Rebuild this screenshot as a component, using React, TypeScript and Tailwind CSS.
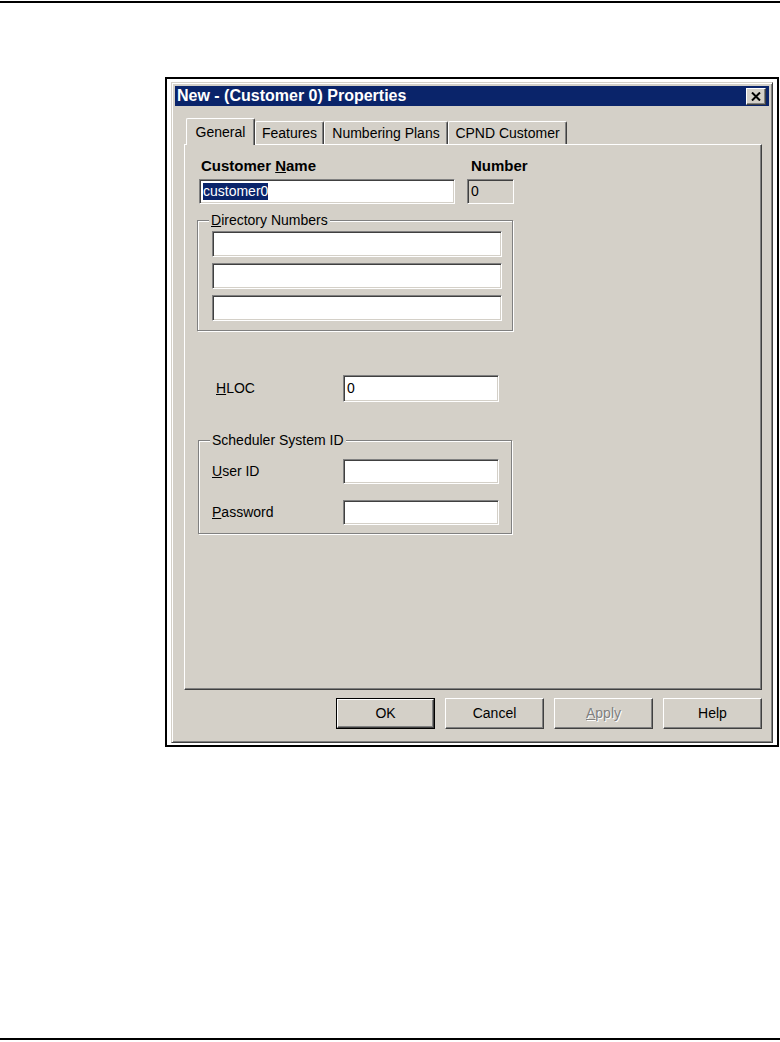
import React from 'react';

const raised = 'border border-t-white border-l-white border-r-[#404040] border-b-[#404040] shadow-[inset_-1px_-1px_0_#808080] bg-[#d4d0c8]';
const sunken = 'border border-t-[#808080] border-l-[#808080] border-r-white border-b-white shadow-[inset_1px_1px_0_#404040,inset_-1px_-1px_0_#d4d0c8]';

const Field: React.FC<{ w: string; h?: string; disabled?: boolean; children?: React.ReactNode }> = ({ w, h = 'h-[26px]', disabled, children }) => (
  <div className={`${w} ${h} ${sunken} ${disabled ? 'bg-[#d4d0c8]' : 'bg-white'} flex items-center pl-[3px] text-[14px] text-black`}>
    {children}
  </div>
);

const GroupBox: React.FC<{ label: React.ReactNode; className: string; children: React.ReactNode }> = ({ label, className, children }) => (
  <div className={`relative border border-[#808080] shadow-[inset_1px_1px_0_#fff,1px_1px_0_#fff] ${className}`}>
    <span className="absolute -top-[10px] left-[11px] px-[2px] bg-[#d4d0c8] text-[14px] leading-[18px] text-black">{label}</span>
    {children}
  </div>
);

const tabs = [
  { name: 'General', w: 'w-[69px]', active: true },
  { name: 'Features', w: 'w-[69px]' },
  { name: 'Numbering Plans', w: 'w-[124px]' },
  { name: 'CPND Customer', w: 'w-[119px]' },
];

const buttons = ['OK', 'Cancel', 'Apply', 'Help'];

export default function App() {
  return (
    <div className="w-[780px] h-[1042px] bg-white flex flex-col font-['Liberation_Sans',Arial,sans-serif] text-black">
      <div className="mt-[1px] h-[2px] bg-black" />

      {/* framed screenshot */}
      <div className="ml-[165px] mt-[74px] w-[614px] h-[670px] border-2 border-black bg-white pt-[3px] pl-[4px]">
        <div className="w-[602px] h-[661px] bg-[#d4d0c8] border border-t-[#d4d0c8] border-l-[#d4d0c8] border-r-[#404040] border-b-[#404040] shadow-[inset_1px_1px_0_#fff,inset_-1px_-1px_0_#808080] p-[3px]">
          {/* title bar */}
          <div className="h-[20px] bg-[#0a246a] flex items-center justify-between pl-[2px]">
            <span className="text-white font-bold text-[16px] leading-[20px]">New - (Customer 0) Properties</span>
            <div className={`w-[20px] h-[17px] mr-[3px] flex items-center justify-center ${raised}`}>
              <svg width="10" height="9" viewBox="0 0 10 9">
                <path d="M1 0.5 L9 8.5 M9 0.5 L1 8.5" stroke="#000" strokeWidth="2" />
              </svg>
            </div>
          </div>

          <div className="ml-[9px] w-[578px]">
            {/* tabs */}
            <div className="mt-[12px] h-[26px] flex items-end pl-[2px]">
              {tabs.map((t) => (
                <div
                  key={t.name}
                  className={`${t.w} ${t.active ? 'h-[27px] -mb-[1px] relative z-10' : 'h-[23px]'} bg-[#d4d0c8] border-l border-t border-r border-l-white border-t-white border-r-[#404040] rounded-tl-[2px] rounded-tr-[2px] shadow-[inset_-1px_0_0_#808080] flex items-center justify-center text-[14px]`}
                >
                  {t.name}
                </div>
              ))}
            </div>

            {/* tab panel */}
            <div className="h-[546px] border-l border-t border-r border-b border-l-white border-t-white border-r-[#404040] border-b-[#404040] shadow-[inset_-1px_-1px_0_#808080]">
              <div className="pl-[14px] pt-[12px]">
                <div className="flex">
                  <div className="w-[256px]">
                    <div className="pl-[2px] h-[18px] leading-[18px] text-[15px] font-bold">
                      Customer <span className="underline">N</span>ame
                    </div>
                    <div className="mt-[4px]">
                      <Field w="w-[256px]" h="h-[25px]">
                        <span className="bg-[#0a246a] text-white leading-[17px]">customer0</span>
                      </Field>
                    </div>
                  </div>
                  <div className="ml-[12px]">
                    <div className="pl-[4px] h-[18px] leading-[18px] text-[15px] font-bold">Number</div>
                    <div className="mt-[4px]">
                      <Field w="w-[47px]" h="h-[25px]" disabled>0</Field>
                    </div>
                  </div>
                </div>

                <GroupBox
                  label={<><span className="underline">D</span>irectory Numbers</>}
                  className="-ml-[2px] mt-[16px] w-[316px] h-[111px] pt-[10px] pl-[14px]"
                >
                  <div className="flex flex-col gap-[6px]">
                    <Field w="w-[290px]" />
                    <Field w="w-[290px]" />
                    <Field w="w-[290px]" />
                  </div>
                </GroupBox>

                <div className="mt-[44px] flex items-center">
                  <span className="w-[144px] pl-[17px] text-[14px]">
                    <span className="underline">H</span>LOC
                  </span>
                  <Field w="w-[156px]" h="h-[27px]">0</Field>
                </div>

                <GroupBox label="Scheduler System ID" className="-ml-[1px] mt-[38px] w-[314px] h-[94px] pt-[18px]">
                  <div className="flex items-center">
                    <span className="w-[144px] pl-[13px] text-[14px]">
                      <span className="underline">U</span>ser ID
                    </span>
                    <Field w="w-[156px]" h="h-[25px]" />
                  </div>
                  <div className="mt-[16px] flex items-center">
                    <span className="w-[144px] pl-[13px] text-[14px]">
                      <span className="underline">P</span>assword
                    </span>
                    <Field w="w-[156px]" h="h-[25px]" />
                  </div>
                </GroupBox>
              </div>
            </div>

            {/* buttons */}
            <div className="mt-[8px] flex justify-end gap-[10px]">
              {buttons.map((b) =>
                b === 'OK' ? (
                  <div key={b} className="w-[99px] h-[31px] border border-black">
                    <div className={`w-full h-full flex items-center justify-center text-[14px] ${raised}`}>OK</div>
                  </div>
                ) : (
                  <div key={b} className={`w-[99px] h-[31px] flex items-center justify-center text-[14px] ${raised}`}>
                    {b === 'Apply' ? (
                      <span className="text-[#808080] [text-shadow:1px_1px_0_#fff]">
                        <span className="underline">A</span>pply
                      </span>
                    ) : (
                      b
                    )}
                  </div>
                )
              )}
            </div>
          </div>
        </div>
      </div>

      <div className="mt-auto mb-[2px] h-[2px] bg-black" />
    </div>
  );
}
